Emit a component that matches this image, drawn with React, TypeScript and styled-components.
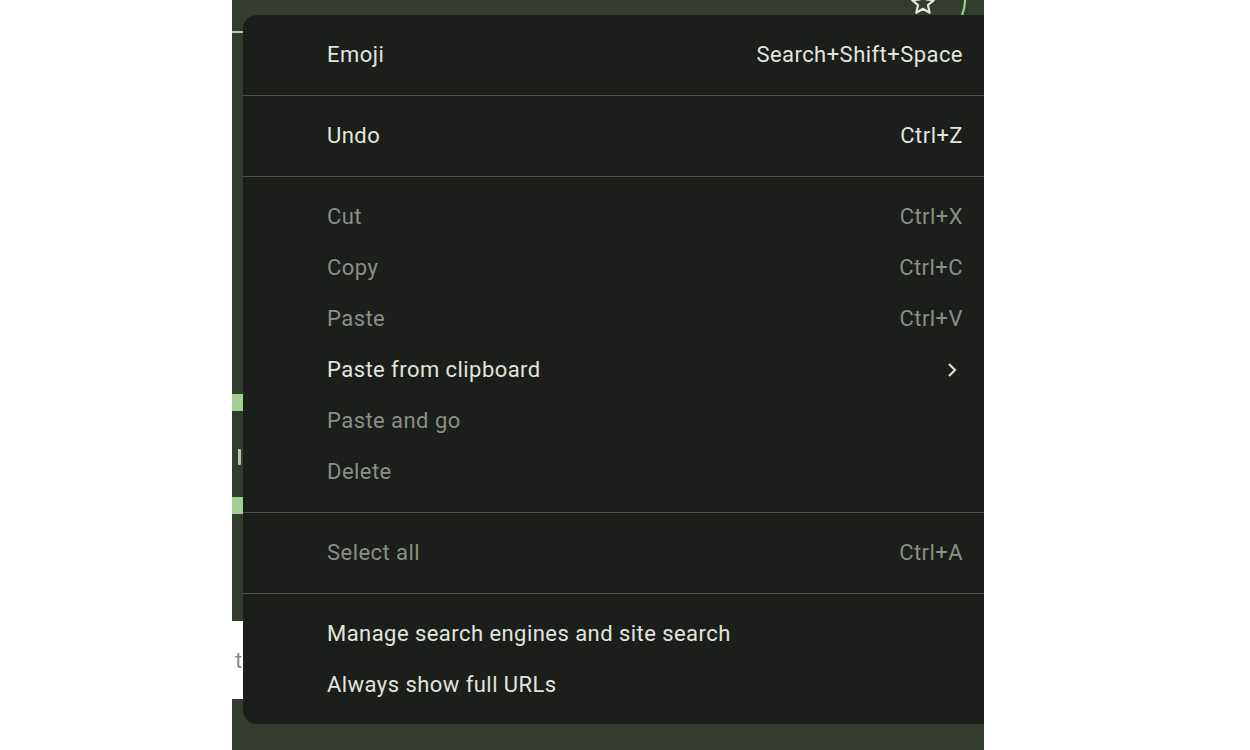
import React from 'react';
import styled, { createGlobalStyle } from 'styled-components';

type MenuItem = {
  label: string
  shortcut?: string
  disabled?: boolean
  submenu?: boolean
}

const sections: MenuItem[][] = [
  [{ label: 'Emoji', shortcut: 'Search+Shift+Space' }],
  [{ label: 'Undo', shortcut: 'Ctrl+Z' }],
  [
    { label: 'Cut', shortcut: 'Ctrl+X', disabled: true },
    { label: 'Copy', shortcut: 'Ctrl+C', disabled: true },
    { label: 'Paste', shortcut: 'Ctrl+V', disabled: true },
    { label: 'Paste from clipboard', submenu: true },
    { label: 'Paste and go', disabled: true },
    { label: 'Delete', disabled: true },
  ],
  [{ label: 'Select all', shortcut: 'Ctrl+A', disabled: true }],
  [
    { label: 'Manage search engines and site search' },
    { label: 'Always show full URLs' },
  ],
]

const App = () => {
  return (
    <>
      <GlobalStyle />
      <Page>
        <Backdrop>
          <Rail>
            <RailLine />
            <RailBlock $top={361} />
            <RailTick />
            <RailBlock $top={32} />
            <RailField>t</RailField>
          </Rail>
          <Main>
            <TopStrip>
              <StarIcon viewBox="0 0 24 24">
                <polygon
                  points="12,2 14.9,8.6 22,9.3 16.6,14 18.2,21 12,17.3 5.8,21 7.4,14 2,9.3 9.1,8.6"
                  fill="none"
                  stroke="#e2e8dc"
                  strokeWidth="2"
                  strokeLinejoin="round"
                />
              </StarIcon>
              <ArcIcon viewBox="0 0 8 30">
                <path d="M1 1 Q7 15 1 29" fill="none" stroke="#93d283" strokeWidth="2.2" />
              </ArcIcon>
            </TopStrip>
            <Menu>
              {sections.map((items, i) => (
                <Section key={i}>
                  {items.map(item => (
                    <Row key={item.label} $disabled={!!item.disabled}>
                      <Label>{item.label}</Label>
                      {item.shortcut && <Shortcut>{item.shortcut}</Shortcut>}
                      {item.submenu && (
                        <Chevron viewBox="0 0 10 16">
                          <path d="M2 2 L8 8 L2 14" fill="none" stroke="#d9ddd5" strokeWidth="2.2" />
                        </Chevron>
                      )}
                    </Row>
                  ))}
                </Section>
              ))}
            </Menu>
          </Main>
        </Backdrop>
      </Page>
    </>
  )
}

const GlobalStyle = createGlobalStyle`
  body {
    margin: 0;
    background: #ffffff;
    font-family: Roboto, "Noto Sans", sans-serif;
  }
`

const Page = styled.div`
  width: 1250px;
  height: 750px;
  padding-left: 232px;
  box-sizing: border-box;
  overflow: hidden;
`

const Backdrop = styled.div`
  display: flex;
  width: 752px;
  height: 750px;
  background: #333c2f;
  overflow: hidden;
`

const Rail = styled.div`
  display: flex;
  flex-direction: column;
  width: 11px;
  flex-shrink: 0;
`

const RailLine = styled.div`
  height: 2px;
  margin-top: 31px;
  background: #a3d797;
`

const RailBlock = styled.div<{ $top: number }>`
  height: 17px;
  margin-top: ${props => props.$top}px;
  background: #a0d190;
`

const RailTick = styled.div`
  width: 3px;
  height: 16px;
  margin: 38px 0 0 6px;
  border-radius: 1px;
  background: #b3c6a8;
`

const RailField = styled.div`
  display: flex;
  align-items: center;
  height: 78px;
  margin-top: 107px;
  padding-left: 3px;
  background: #ffffff;
  color: #8c8c8c;
  font-size: 22px;
  overflow: hidden;
`

const Main = styled.div`
  display: flex;
  flex-direction: column;
  flex: 1;
  min-width: 0;
`

const TopStrip = styled.div`
  display: flex;
  align-items: flex-start;
  justify-content: flex-end;
  gap: 25px;
  height: 15px;
  padding-right: 15px;
  flex-shrink: 0;
  overflow: hidden;
`

const StarIcon = styled.svg`
  width: 26px;
  height: 26px;
  margin-top: -10px;
`

const ArcIcon = styled.svg`
  width: 8px;
  height: 30px;
  margin-top: -14px;
`

const Menu = styled.div`
  display: flex;
  flex-direction: column;
  width: 741px;
  height: 709px;
  flex-shrink: 0;
  background: #1b1e1a;
  border-radius: 14px 0 0 14px;
  overflow: hidden;
`

const Section = styled.div`
  display: flex;
  flex-direction: column;
  padding: 14px 0 15px;
  border-bottom: 1px solid #4a5046;

  &:last-child {
    border-bottom: none;
    padding-bottom: 14px;
  }
`

const Row = styled.div<{ $disabled: boolean }>`
  display: flex;
  align-items: center;
  height: 51px;
  padding: 0 21px 0 84px;
  color: ${props => props.$disabled ? '#8a8f87' : '#e2e5de'};
  font-size: 22px;
  letter-spacing: 0.45px;
`

const Label = styled.span`
  flex: 1;
  white-space: nowrap;
`

const Shortcut = styled.span`
  white-space: nowrap;
`

const Chevron = styled.svg`
  width: 10px;
  height: 16px;
  margin-right: 6px;
`

export default App;
